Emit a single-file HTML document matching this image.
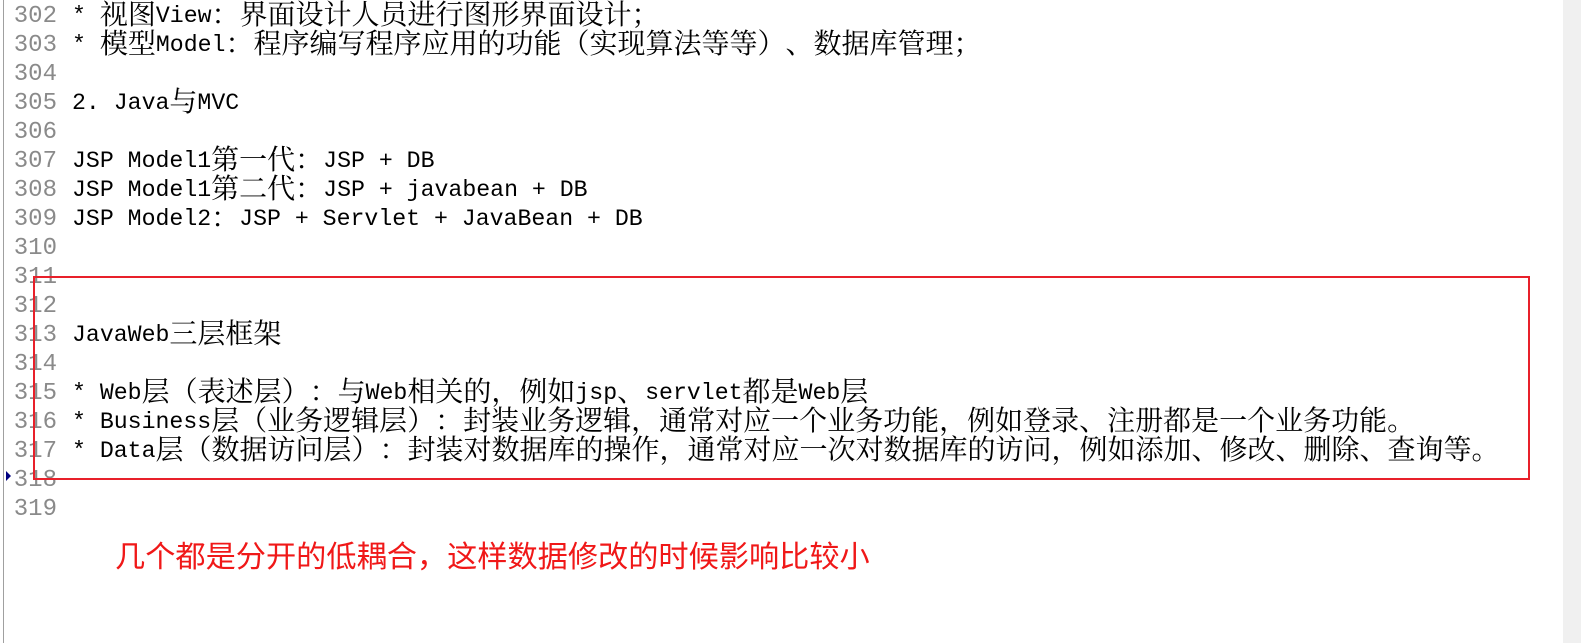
<!DOCTYPE html>
<html><head><meta charset="utf-8"><style>
html,body{margin:0;padding:0;background:#fff;width:1581px;height:643px;overflow:hidden;position:relative}
.lb{position:absolute;left:3px;top:0;width:1px;height:643px;background:#a0a0a0}
.rs{position:absolute;left:1563px;top:0;width:18px;height:643px;background:#f0f0f0}
.ln{position:absolute;left:0;width:57px;text-align:right;color:#8a8a8a;font:24px "Liberation Mono",monospace;line-height:29px;height:29px}
.tx{position:absolute;left:72px;color:#000;font:23.2px "Liberation Mono",monospace;line-height:29px;height:29px;white-space:pre;text-spacing-trim:space-all}
.tx b{font-weight:normal;font-family:"Noto Serif CJK SC","Noto Sans CJK SC",serif;font-size:28px;line-height:0;position:relative;top:2px;text-spacing-trim:space-all;font-feature-settings:"fwid"}
.box{position:absolute;left:33px;top:276px;width:1493px;height:200px;border:2px solid #e8202a}
.red{position:absolute;left:115px;top:535px;color:#f01818;font:30.2px "Noto Sans CJK SC",sans-serif;line-height:38px;white-space:nowrap}
.mk{position:absolute;left:6px;top:471px;width:0;height:0;border-top:5px solid transparent;border-bottom:5px solid transparent;border-left:5px solid #000080}
</style></head><body>
<div class="lb"></div><div class="rs"></div>
<div class="ln" style="top:2px">302</div><div class="tx" style="top:2px">* <b>视图</b>View<b>：界面设计人员进行图形界面设计；</b></div>
<div class="ln" style="top:31px">303</div><div class="tx" style="top:31px">* <b>模型</b>Model<b>：程序编写程序应用的功能（实现算法等等）、数据库管理；</b></div>
<div class="ln" style="top:60px">304</div>
<div class="ln" style="top:89px">305</div><div class="tx" style="top:89px">2. Java<b>与</b>MVC</div>
<div class="ln" style="top:118px">306</div>
<div class="ln" style="top:147px">307</div><div class="tx" style="top:147px">JSP Model1<b>第一代：</b>JSP + DB</div>
<div class="ln" style="top:176px">308</div><div class="tx" style="top:176px">JSP Model1<b>第二代：</b>JSP + javabean + DB</div>
<div class="ln" style="top:205px">309</div><div class="tx" style="top:205px">JSP Model2<b>：</b>JSP + Servlet + JavaBean + DB</div>
<div class="ln" style="top:234px">310</div>
<div class="ln" style="top:263px">311</div>
<div class="ln" style="top:292px">312</div>
<div class="ln" style="top:321px">313</div><div class="tx" style="top:321px">JavaWeb<b>三层框架</b></div>
<div class="ln" style="top:350px">314</div>
<div class="ln" style="top:379px">315</div><div class="tx" style="top:379px">* Web<b>层（表述层）：与</b>Web<b>相关的，例如</b>jsp<b>、</b>servlet<b>都是</b>Web<b>层</b></div>
<div class="ln" style="top:408px">316</div><div class="tx" style="top:408px">* Business<b>层（业务逻辑层）：封装业务逻辑，通常对应一个业务功能，例如登录、注册都是一个业务功能。</b></div>
<div class="ln" style="top:437px">317</div><div class="tx" style="top:437px">* Data<b>层（数据访问层）：封装对数据库的操作，通常对应一次对数据库的访问，例如添加、修改、删除、查询等。</b></div>
<div class="ln" style="top:466px">318</div>
<div class="ln" style="top:495px">319</div>
<div class="mk"></div>
<div class="box"></div>
<div class="red">几个都是分开的低耦合，这样数据修改的时候影响比较小</div>
</body></html>
